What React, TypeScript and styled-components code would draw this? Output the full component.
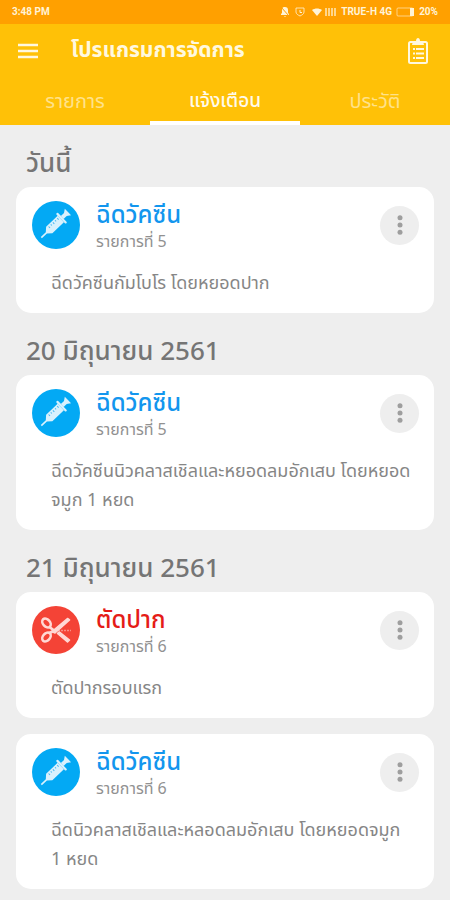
import React from 'react';
import styled, { createGlobalStyle } from 'styled-components';

const Global = createGlobalStyle`
  * { box-sizing: border-box; }
  body {
    margin: 0;
    background: #eeeeee;
    font-family: 'Noto Sans Thai', 'Noto Sans', sans-serif;
    color: #757575;
  }
  button { font: inherit; border: 0; padding: 0; background: none; cursor: pointer; }
  h1, h2, h3, p { margin: 0; font-weight: 400; }
`;

const Page = styled.div`
  min-height: 100vh;
  display: flex;
  flex-direction: column;
`;

const StatusBar = styled.div`
  height: 24px;
  padding: 0 12px;
  display: flex;
  align-items: center;
  justify-content: space-between;
  background: #ffa000;
  color: #fff3d6;
  font: 700 10px/16px Roboto, sans-serif;
`;

const StatusGroup = styled.div`
  display: flex;
  align-items: center;
  gap: 4px;
`;

const Header = styled.header`
  background: #ffc107;
  color: #fff8df;
`;

const AppBar = styled.div`
  height: 54px;
  padding: 0 20px 0 18px;
  display: flex;
  align-items: center;
`;

const IconButton = styled.button`
  display: flex;
  color: inherit;
`;

const AppTitle = styled.h1`
  flex: 1;
  margin-left: 33px;
  font-size: 21px;
  line-height: 30px;
  font-weight: 700;
  white-space: nowrap;
`;

const Tabs = styled.nav`
  display: grid;
  grid-template-columns: repeat(3, 1fr);
`;

const Tab = styled.button<{ $active?: boolean }>`
  height: 47px;
  font-size: ${(p) => (p.$active ? 19 : 20)}px;
  line-height: 28px;
  color: ${(p) => (p.$active ? '#fffaea' : '#ffe28a')};
  font-weight: ${(p) => (p.$active ? 500 : 400)};
  border-top: 4px solid transparent;
  border-bottom: 4px solid ${(p) => (p.$active ? '#ffffff' : 'transparent')};
`;

const Feed = styled.main`
  padding: 0 16px 12px;
`;

const Cards = styled.div`
  display: grid;
  grid-template-columns: minmax(0, 1fr);
  gap: 16px;
`;

const DateHeading = styled.h2`
  height: 62px;
  padding: 16px 10px 0;
  display: flex;
  align-items: center;
  font-size: 26px;
  line-height: 36px;
  font-weight: 500;
  color: #757575;
`;

const Card = styled.article`
  background: #ffffff;
  border-radius: 15px;
  padding: 14px 15px 15px 16px;
`;

const CardTop = styled.div`
  display: flex;
  align-items: center;
  gap: 16px;
  height: 48px;
`;

const Badge = styled.div<{ $color: string }>`
  width: 48px;
  height: 48px;
  flex: none;
  border-radius: 50%;
  background: ${(p) => p.$color};
`;

const Titles = styled.div`
  flex: 1;
  padding-top: 6px;
`;

const CardTitle = styled.h3<{ $color: string }>`
  font-size: 24px;
  line-height: 28px;
  font-weight: 500;
  color: ${(p) => p.$color};
`;

const CardSub = styled.p`
  font-size: 16px;
  line-height: 24px;
  font-weight: 400;
  color: #919191;
`;

const MoreButton = styled.button`
  width: 39px;
  height: 39px;
  border-radius: 50%;
  background: #eeeeee;
  display: flex;
  align-items: center;
  justify-content: center;
`;

const Description = styled.p`
  margin: 20px 0 0 19px;
  font-size: 18px;
  line-height: 29px;
  font-weight: 400;
  color: #868686;
  white-space: pre-line;
`;

const StatusIcons = () => (
  <svg width="57" height="12" viewBox="0 0 57 12" fill="currentColor" aria-hidden="true">
    <path d="M1 9V8l1-1V4c0-2 1-3 2-3h1c2 0 3 1 3 3v3l1 1v1zM4 10h2l-1 1z" />
    <path d="M1 1l8 9" stroke="#ffa000" strokeWidth="1" />
    <path d="M16 2h8v4c0 2-2 3-4 4-2-1-4-2-4-4z" fill="none" stroke="currentColor" opacity="0.8" />
    <path d="M20 4v2.500h2" fill="none" stroke="currentColor" />
    <path d="M32 4c3-2 7-2 10 0l-5 6z" />
    <path d="M46 2v8M49 2v8M52 2v8M55 2v8" stroke="currentColor" strokeWidth="2" opacity="0.65" />
  </svg>
);

const BatteryIcon = () => (
  <svg width="19" height="10" viewBox="0 0 19 10" fill="none" aria-hidden="true">
    <rect x="1" y="1" width="16" height="8" rx="1" stroke="currentColor" opacity="0.6" />
    <path d="M14 1h4v8h-4z" fill="currentColor" />
  </svg>
);

const MenuIcon = () => (
  <svg width="20" height="16" viewBox="0 0 20 16" stroke="currentColor" strokeWidth="2.500" aria-hidden="true">
    <path d="M0 2h20M0 8h20M0 14h20" />
  </svg>
);

const ClipboardIcon = () => (
  <svg width="24" height="28" viewBox="0 0 24 28" fill="none" stroke="currentColor" aria-hidden="true">
    <rect x="3" y="5" width="18" height="21" rx="1.500" strokeWidth="2" />
    <path d="M6 8l1-4h3c0-4 4-4 4 0h3l1 4z" fill="currentColor" stroke="none" />
    <path d="M7 12h2M7 16.500h2M7 21h2M10 12h8M10 16.500h8M10 21h8" strokeWidth="1.800" />
  </svg>
);

const SyringeIcon = () => (
  <svg viewBox="0 0 48 48" aria-hidden="true">
    <g transform="translate(23 23.500) rotate(-44)" fill="#d9f1fd">
      <path d="M-19-.8h7L-8-4.500H8v9H-8L-12 .8h-7z" />
      <rect x="8" y="-7" width="2.200" height="14" rx="1" />
      <rect x="10" y="-2" width="5" height="4" />
      <path d="M13-1l5-3.500v9L13 1z" />
      <path d="M-6-3v2M-3-3v1.500M0-3v2M3-3v1.500M6-3v2" stroke="#48b9f2" fill="none" />
    </g>
  </svg>
);

const ScissorsIcon = () => (
  <svg viewBox="0 0 48 48" fill="none" stroke="#ffd9d5" aria-hidden="true">
    <ellipse cx="14.500" cy="17" rx="5" ry="3.500" transform="rotate(48 14.500 17)" strokeWidth="2.600" />
    <ellipse cx="14.500" cy="31" rx="5" ry="3.500" transform="rotate(-48 14.500 31)" strokeWidth="2.600" />
    <path d="M17.500 21l4.500 3.500M17.500 27l5-2.500" strokeWidth="2.800" />
    <path d="M20 25.500L35.500 12.500l2 1.500L23 27z" fill="#ffd9d5" strokeWidth="1.600" strokeLinejoin="round" />
    <path d="M25.500 27.500l2-1.500L37.500 34l-2 2z" fill="#ffd9d5" strokeWidth="1.600" strokeLinejoin="round" />
    <path d="M26 24.500h13" strokeWidth="1.500" strokeDasharray="2 1" opacity="0.5" />
  </svg>
);

const MoreIcon = () => (
  <svg width="6" height="20" viewBox="0 0 6 20" fill="#9e9e9e" aria-hidden="true">
    <circle cx="3" cy="2.700" r="2.500" />
    <circle cx="3" cy="10" r="2.500" />
    <circle cx="3" cy="17.300" r="2.500" />
  </svg>
);

type Kind = 'vaccine' | 'trim';
type Task = { kind: Kind; title: string; sub: string; text: string };

const kinds = {
  vaccine: { badge: '#03a9f4', title: '#1296ee', Icon: SyringeIcon },
  trim: { badge: '#f44336', title: '#e51c17', Icon: ScissorsIcon },
};

const days: { date: string; tasks: Task[] }[] = [
  {
    date: 'วันนี้',
    tasks: [{ kind: 'vaccine', title: 'ฉีดวัคซีน', sub: 'รายการที่ 5', text: 'ฉีดวัคซีนกัมโบโร โดยหยอดปาก' }],
  },
  {
    date: '20 มิถุนายน 2561',
    tasks: [
      {
        kind: 'vaccine',
        title: 'ฉีดวัคซีน',
        sub: 'รายการที่ 5',
        text: 'ฉีดวัคซีนนิวคลาสเชิลและหยอดลมอักเสบ โดยหยอด\nจมูก 1 หยด',
      },
    ],
  },
  {
    date: '21 มิถุนายน 2561',
    tasks: [
      { kind: 'trim', title: 'ตัดปาก', sub: 'รายการที่ 6', text: 'ตัดปากรอบแรก' },
      {
        kind: 'vaccine',
        title: 'ฉีดวัคซีน',
        sub: 'รายการที่ 6',
        text: 'ฉีดนิวคลาสเชิลและหลอดลมอักเสบ โดยหยอดจมูก\n1 หยด',
      },
    ],
  },
];

const TaskCard = ({ task }: { task: Task }) => {
  const { badge, title, Icon } = kinds[task.kind];
  return (
    <Card>
      <CardTop>
        <Badge $color={badge}>
          <Icon />
        </Badge>
        <Titles>
          <CardTitle $color={title}>{task.title}</CardTitle>
          <CardSub>{task.sub}</CardSub>
        </Titles>
        <MoreButton aria-label="ตัวเลือก">
          <MoreIcon />
        </MoreButton>
      </CardTop>
      <Description>{task.text}</Description>
    </Card>
  );
};

export default function App() {
  return (
    <Page>
      <Global />
      <StatusBar>
        <span>3:48 PM</span>
        <StatusGroup>
          <StatusIcons />
          <span>TRUE-H 4G</span>
          <BatteryIcon />
          <span>20%</span>
        </StatusGroup>
      </StatusBar>
      <Header>
        <AppBar>
          <IconButton aria-label="เมนู">
            <MenuIcon />
          </IconButton>
          <AppTitle>โปรแกรมการจัดการ</AppTitle>
          <IconButton aria-label="รายการงาน">
            <ClipboardIcon />
          </IconButton>
        </AppBar>
        <Tabs>
          <Tab>รายการ</Tab>
          <Tab $active aria-current="page">แจ้งเตือน</Tab>
          <Tab>ประวัติ</Tab>
        </Tabs>
      </Header>
      <Feed>
        {days.map((day) => (
          <section key={day.date}>
            <DateHeading>{day.date}</DateHeading>
            <Cards>
              {day.tasks.map((task) => (
                <TaskCard key={task.text} task={task} />
              ))}
            </Cards>
          </section>
        ))}
      </Feed>
    </Page>
  );
}
